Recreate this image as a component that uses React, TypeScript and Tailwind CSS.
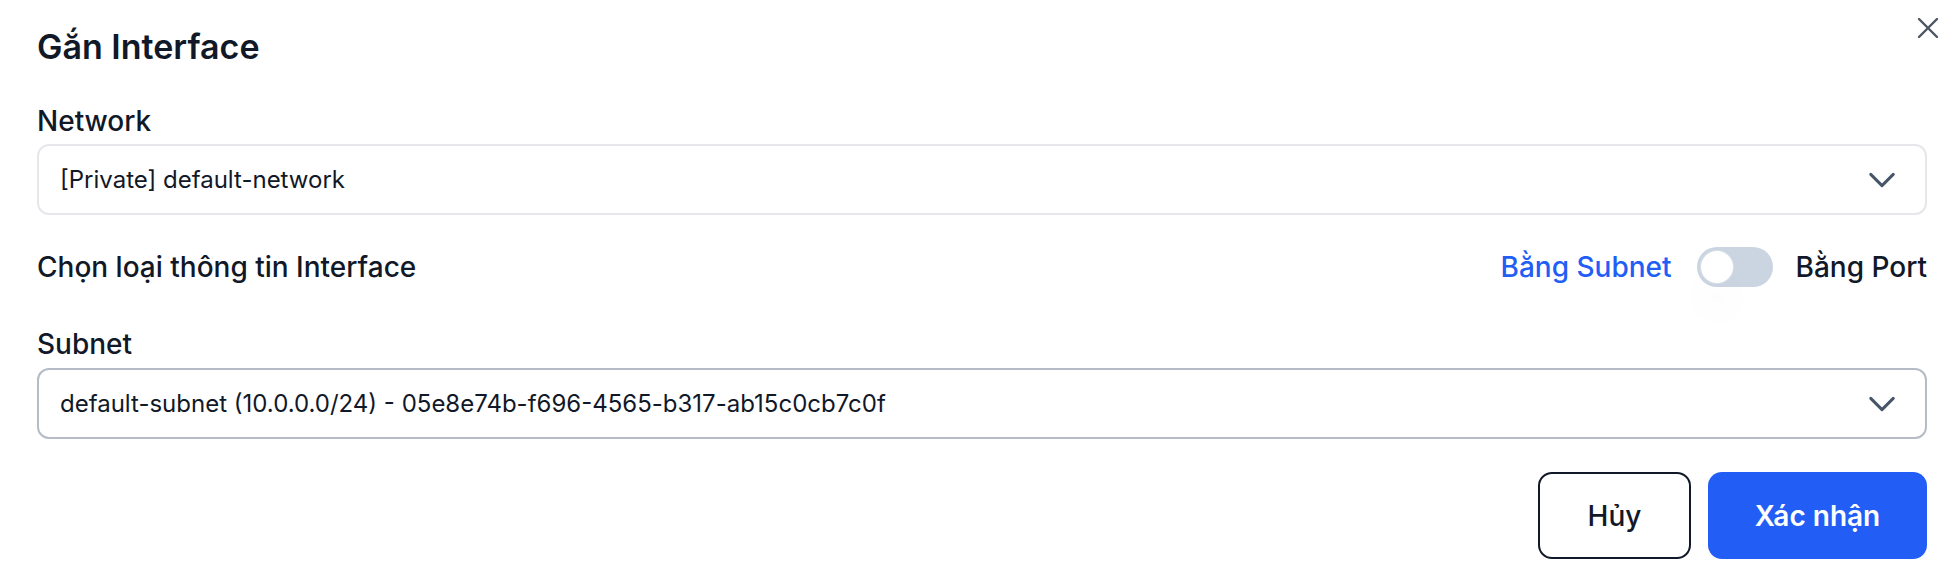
import { useState } from 'react';

function ChevronDown() {
  return (
    <svg viewBox="0 0 24 24" fill="none" stroke="currentColor" strokeWidth={2} className="h-[36px] w-[36px]">
      <path strokeLinecap="round" strokeLinejoin="round" d="m19.5 8.25-7.5 7.5-7.5-7.5" />
    </svg>
  );
}

function SelectBox({ value, className = '' }: { value: string; className?: string }) {
  return (
    <div
      className={`flex h-[71px] items-center justify-between rounded-[12px] border-2 bg-white pl-[21px] pr-[25px] ${className}`}
    >
      <span className="text-[24px] leading-[35px] text-[#111827]">{value}</span>
      <span className="text-[#475569]">
        <ChevronDown />
      </span>
    </div>
  );
}

export default function App() {
  const [byPort, setByPort] = useState(false);

  return (
    <div className="relative h-[580px] w-[1956px] bg-white pl-[37px] pr-[29px] pt-[22px] font-['Inter',sans-serif] text-[#111827]">
      <button type="button" aria-label="Close" className="absolute right-[10px] top-[10px] text-[#4b5563]">
        <svg viewBox="0 0 24 24" fill="none" stroke="currentColor" strokeWidth={1.6} className="h-[36px] w-[36px]">
          <path strokeLinecap="round" strokeLinejoin="round" d="M6 18 18 6M6 6l12 12" />
        </svg>
      </button>

      <h2 className="text-[34px] font-semibold leading-[49px]">Gắn Interface</h2>

      <div className="mt-[29px]">
        <label className="block text-[28px] font-medium leading-[42px]">Network</label>
        <SelectBox value="[Private] default-network" className="mt-[2px] border-[#e5e7eb]" />
      </div>

      <div className="mt-[31px] flex h-[42px] items-center justify-between">
        <span className="text-[28px] font-medium leading-[42px]">Chọn loại thông tin Interface</span>
        <div className="flex items-center">
          <span className={`text-[28px] font-medium leading-[42px] ${byPort ? 'text-[#111827]' : 'text-[#225ef5]'}`}>
            Bằng Subnet
          </span>
          <button
            type="button"
            role="switch"
            aria-checked={byPort}
            onClick={() => setByPort(!byPort)}
            className={`ml-[25px] mr-[23px] flex h-[40px] w-[76px] items-center rounded-full px-[4px] ${byPort ? 'bg-[#225ef5]' : 'bg-[#cbd5e1]'}`}
          >
            <span
              className={`block h-[32px] w-[32px] rounded-full bg-white shadow-[0_30px_40px_-6px_rgba(0,0,0,0.07)] ring-1 ring-[#d8dee7] ${byPort ? 'translate-x-[36px]' : ''}`}
            />
          </button>
          <span className={`text-[28px] font-medium leading-[42px] ${byPort ? 'text-[#225ef5]' : 'text-[#111827]'}`}>
            Bằng Port
          </span>
        </div>
      </div>

      <div className="mt-[35px]">
        <label className="block text-[28px] font-medium leading-[42px]">Subnet</label>
        <SelectBox
          value="default-subnet (10.0.0.0/24) - 05e8e74b-f696-4565-b317-ab15c0cb7c0f"
          className="mt-[3px] border-[#b5bcc7]"
        />
      </div>

      <div className="mt-[33px] flex justify-end gap-[17px]">
        <button
          type="button"
          className="flex h-[87px] w-[153px] items-center justify-center rounded-[14px] border-2 border-[#111827] bg-white text-[28px] font-medium text-[#111827]"
        >
          Hủy
        </button>
        <button
          type="button"
          className="flex h-[87px] w-[219px] items-center justify-center rounded-[14px] bg-[#225ef5] text-[28px] font-semibold text-white"
        >
          Xác nhận
        </button>
      </div>
    </div>
  );
}
